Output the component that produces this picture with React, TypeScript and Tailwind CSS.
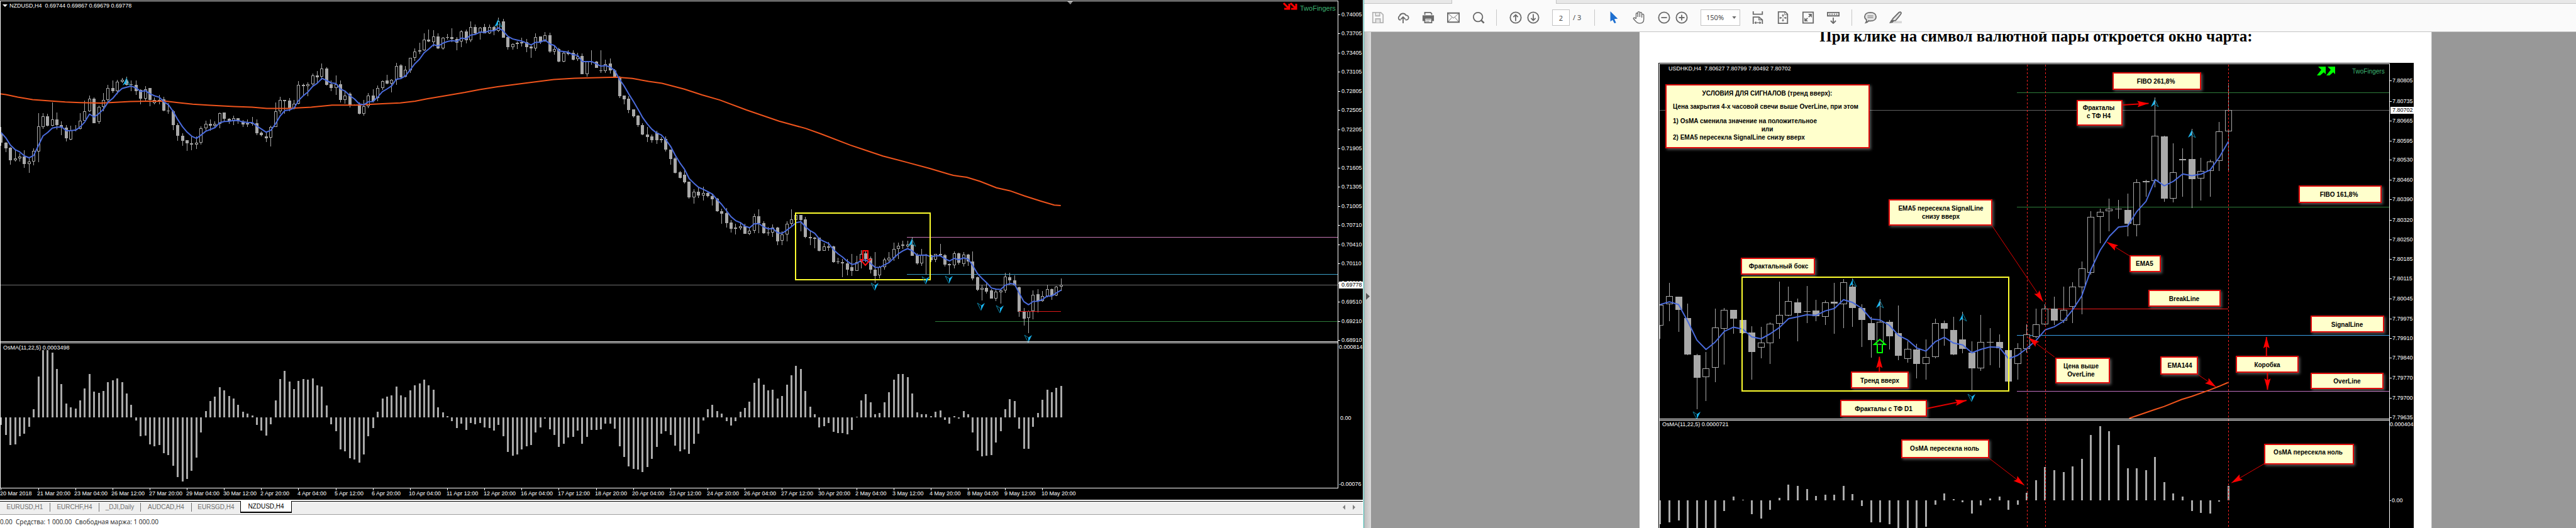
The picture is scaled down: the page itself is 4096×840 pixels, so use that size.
import React from "react";

type Candle = [high: number, top: number, bottom: number, low: number, filled: number];
type Point = [number, number];

const GREY = "#a9a9a9";
const SMALL = "font-['Liberation_Sans',sans-serif] text-[9px]";

/* ---------- NZDUSD data ---------- */

const NZD_MAIN: Candle[] = [
  [572,600,643,655,1],[638,643,668,684,1],[663,664,720,740,1],[676,713,720,728,0],[690,704,714,726,0],
  [677,703,737,754,1],[710,727,739,777,0],[667,678,728,745,0],[510,568,681,731,0],[510,523,571,580,0],
  [513,523,566,568,1],[460,537,566,568,0],[507,536,563,583,1],[546,562,570,608,1],[562,573,622,637,1],
  [565,586,629,631,0],[562,582,583,592,0],[510,542,581,583,0],[452,502,542,544,0],[430,444,502,504,0],
  [439,445,553,554,1],[475,482,550,558,0],[418,450,482,500,0],[382,396,450,462,0],[363,396,409,418,1],
  [358,367,409,425,0],[350,359,367,374,0],[345,361,381,384,1],[363,379,383,409,0],[363,382,410,426,1],
  [402,404,443,469,1],[387,401,443,452,0],[395,397,450,477,1],[439,450,464,470,0],[426,449,450,469,0],
  [435,447,499,501,1],[465,497,501,512,1],[495,500,562,585,1],[555,562,611,634,1],[600,612,634,655,1],
  [630,632,644,678,1],[610,644,650,676,1],[615,641,650,671,0],[568,578,641,651,0],[542,557,578,587,0],
  [538,557,566,587,1],[546,557,566,574,0],[506,508,558,578,0],[505,507,535,546,1],[533,534,545,558,1],
  [520,533,547,564,0],[533,533,545,558,1],[541,545,561,571,1],[538,554,560,570,0],[525,553,556,567,0],
  [538,555,600,609,1],[590,598,608,613,1],[597,614,622,640,1],[567,570,620,658,0],[460,500,570,572,0],
  [436,450,500,512,0],[449,450,455,512,0],[442,453,490,500,1],[450,466,488,491,0],[366,383,466,469,0],
  [375,383,388,431,1],[371,380,388,433,0],[332,338,380,385,0],[321,338,347,371,1],[287,309,346,358,0],
  [303,308,381,384,1],[361,379,396,410,1],[340,380,396,426,0],[362,379,451,462,1],[408,430,451,467,0],
  [417,421,472,483,1],[470,472,474,474,1],[462,473,512,514,1],[450,479,512,520,0],[418,430,479,487,0],
  [403,429,455,462,1],[384,396,440,456,0],[361,364,396,404,0],[337,363,376,378,1],[355,359,376,415,0],
  [282,296,359,381,0],[288,295,347,350,1],[298,315,346,348,0],[259,260,316,328,0],[217,231,260,274,0],
  [191,225,231,244,0],[149,179,226,228,0],[132,178,186,189,1],[136,163,189,209,0],[149,163,219,221,1],
  [167,170,218,224,0],[152,168,171,177,1],[128,168,174,189,1],[166,174,193,227,1],[136,142,186,212,0],
  [132,141,182,195,1],[97,123,182,190,0],[110,123,149,156,1],[121,124,148,178,0],[107,123,149,150,1],
  [110,123,150,152,0],[115,123,140,158,1],[78,97,140,143,0],[86,97,169,171,1],[166,167,211,224,1],
  [195,198,211,224,0],[188,191,198,221,0],[170,190,194,210,1],[175,190,211,236,1],[205,209,219,260,1],
  [149,166,219,228,0],[164,165,190,199,1],[144,158,186,188,0],[146,157,233,237,1],[205,221,232,247,0],
  [214,220,276,280,1],[233,237,276,280,0],[225,236,242,250,1],[225,237,269,271,1],[238,254,267,275,0],
  [240,251,334,335,1],[273,277,334,345,0],[227,277,278,290,0],[273,277,305,306,1],[227,316,321,329,1],
  [269,288,321,328,0],[264,287,318,332,1],[310,316,349,352,1],[343,352,433,442,1],[430,431,448,469,1],
  [433,444,496,509,1],[491,493,522,530,1],[517,520,563,572,1],[553,562,605,608,1],[570,604,616,640,1],
  [606,614,630,642,1],[589,597,631,648,1],[616,625,631,643,0],[614,625,674,682,1],[672,672,716,740,1],
  [706,713,779,781,1],[768,776,801,802,1],[765,787,820,827,1],[817,818,889,894,1],[852,864,889,916,0],
  [844,862,880,892,1],[840,869,880,902,0],[860,868,883,888,1],[870,883,896,924,1],[890,894,950,953,1],
  [938,949,962,1006,1],[936,960,1003,1025,1],[990,1002,1030,1046,1],[1008,1025,1029,1054,1],[997,1018,1026,1034,0],
  [1006,1018,1051,1052,1],[1026,1038,1051,1058,0],[962,972,1038,1048,0],[943,972,1005,1050,1],[995,1004,1050,1051,1],
  [1022,1046,1048,1060,1],[1010,1025,1046,1066,0],[1022,1024,1085,1104,1],[1042,1055,1084,1104,0],[995,1007,1054,1085,0],
  [941,988,1007,1016,0],[964,966,990,992,0],[966,968,990,1040,1],[975,988,1065,1071,1],[1040,1065,1073,1104,1],
  [1065,1069,1074,1118,1],[1069,1070,1128,1130,1],[1095,1108,1128,1129,0],[1088,1109,1113,1128,1],[1105,1110,1178,1182,1],
  [1160,1177,1180,1188,1],[1165,1180,1186,1247,1],[1165,1184,1214,1239,1],[1143,1203,1218,1241,1],[1152,1178,1218,1220,0],
  [1125,1142,1180,1208,0],[1128,1141,1166,1180,1],[1155,1162,1214,1231,1],[1133,1213,1241,1273,1],[1195,1202,1240,1253,0],
  [1160,1169,1202,1214,0],[1134,1160,1170,1180,0],[1091,1119,1160,1174,0],[1091,1105,1120,1166,0],[1082,1100,1106,1120,0],
  [1084,1100,1110,1113,0],[1067,1100,1150,1152,1],[1140,1149,1186,1190,1],[1120,1148,1186,1196,0],[1142,1147,1148,1236,0],
];

const NZD_RECENT: Candle[] = [
  [355,360,382,390,1],[352,353,378,390,0],[308,352,360,365,1],[354,359,402,410,1],[396,398,403,443,1],
  [342,350,403,418,0],[349,350,391,402,1],[346,355,398,410,0],[353,355,388,406,1],[341,387,461,471,1],
  [453,457,512,517,1],[489,505,511,560,0],[485,505,520,530,1],[508,515,550,552,1],[510,520,550,563,0],
  [506,514,522,573,0],[437,453,514,527,0],[436,457,470,489,1],[447,470,493,495,1],[499,500,609,632,1],
  [594,609,639,671,1],[604,606,638,705,0],[515,534,606,643,0],[510,533,562,612,1],[518,540,562,566,0],
  [491,508,540,545,0],[507,508,540,558,1],[495,498,536,541,0],[462,489,498,519,0],
];

const NZD_OSMA = [
  516,567,621,617,576,560,525,435,267,128,128,144,228,306,405,426,432,390,327,252,345,351,342,294,285,276,294,354,
  411,492,576,570,615,627,621,663,672,726,786,807,795,753,684,555,444,393,369,321,336,366,381,411,447,459,468,516,
  546,570,513,390,279,237,291,330,288,279,282,276,312,318,414,513,549,642,651,687,693,711,669,573,531,447,378,369,
  363,318,363,372,339,312,303,282,312,333,426,450,471,495,531,510,543,507,513,507,528,531,546,516,576,654,675,669,
  642,627,621,555,528,483,540,567,630,612,582,
].map((v) => 477 - v);

const NZD_OSMA_LATE = [
  549,516,582,549,513,513,510,480,480,504,597,651,699,714,717,729,702,660,600,531,519,537,594,621,612,636,582,531,
  462,405,381,414,429,468,489,465,417,399,366,270,246,279,306,303,351,336,279,228,180,198,312,393,432,498,492,477,
  522,528,528,534,513,444,360,327,369,432,423,369,318,252,222,222,240,324,420,432,432,441,417,412,459,479,440,452,
  416,431,524,619,649,646,641,578,519,405,354,363,504,610,610,495,423,357,303,318,293,285,
].map((v) => 447 - v);

const NZD_EMA144: Point[] = [
  [0,422],[20,426],[60,437],[110,448],[160,453],[220,459],[270,462],[340,464],[400,460],[440,457],[500,455],[560,455],
  [600,462],[650,469],[710,474],[790,479],[850,482],[900,488],[970,488],[1050,482],[1120,473],[1200,473],[1290,467],
  [1350,463],[1400,455],[1440,445],[1500,431],[1568,416],[1618,403],[1678,390],[1768,375],[1868,358],[1938,352],
  [2018,349],[2078,347],[2133,353],[2188,366],[2233,375],[2308,401],[2368,427],[2428,450],[2518,495],[2628,545],
  [2718,578],[2768,602],[2868,653],[2918,675],[2978,702],[3058,730],[3136,758],[3202,784],[3216,789],[3261,798],
  [3306,816],[3361,845],[3406,858],[3456,882],[3511,905],[3556,923],[3578,925],
];

const NZD_PRICES = [
  "0.74005","0.73705","0.73405","0.73105","0.72805","0.72505","0.72205","0.71905","0.71605","0.71305","0.71005",
  "0.70710","0.70410","0.70110","0.69810","0.69510","0.69210","0.68910",
];

const NZD_DATES = [
  "20 Mar 2018","21 Mar 20:00","23 Mar 04:00","26 Mar 12:00","27 Mar 20:00","29 Mar 04:00","30 Mar 12:00","2 Apr 20:00",
  "4 Apr 04:00","5 Apr 12:00","6 Apr 20:00","10 Apr 04:00","11 Apr 12:00","12 Apr 20:00","16 Apr 04:00","17 Apr 12:00",
  "18 Apr 20:00","20 Apr 04:00","23 Apr 12:00","24 Apr 20:00","26 Apr 04:00","27 Apr 12:00","30 Apr 20:00","2 May 04:00",
  "3 May 12:00","4 May 20:00","8 May 04:00","9 May 12:00","10 May 20:00",
];

/* ---------- USDHKD data ---------- */

const HKD: Candle[] = [
  [831,832,901,944,0],[760,804,830,885,0],[806,806,849,922,1],[827,875,996,997,1],[994,997,1073,1177,1],
  [988,1041,1071,1149,0],[844,906,1039,1087,0],[842,849,910,1028,0],[848,849,877,928,1],[881,881,926,927,1],
  [902,923,988,1078,1],[904,957,973,1009,0],[890,894,958,1026,0],[756,866,895,944,0],[773,819,868,869,0],
  [811,823,859,952,1],[770,852,854,893,0],[816,851,870,885,1],[818,823,872,898,0],[760,822,828,927,1],
  [747,757,830,908,0],[745,771,843,904,1],[831,842,882,970,1],[871,892,949,1006,1],[813,888,963,965,0],
  [882,888,935,979,1],[835,925,1000,1015,1],[952,978,1010,1022,0],[960,980,1027,1075,1],[946,1005,1027,1078,0],
  [877,892,1004,1008,0],[883,893,910,967,1],[871,915,996,997,1],[854,946,977,992,1],[953,990,1042,1115,1],
  [865,955,1042,1049,0],[909,955,957,1032,0],[929,955,975,1040,1],[981,982,1085,1086,1],[959,976,1027,1078,0],
  [896,930,977,990,0],[844,897,938,941,0],[831,845,897,899,0],[806,844,884,898,1],[771,849,884,892,0],
  [758,773,838,892,0],[689,711,774,863,0],[523,541,727,732,0],[516,525,543,629,0],[481,515,524,590,0],
  [486,515,517,548,0],[465,519,565,606,1],[417,429,568,606,0],[420,424,429,475,0],[149,275,424,444,0],
  [275,276,481,493,1],[299,395,481,495,0],[316,352,356,475,0],[251,352,418,513,1],[348,391,416,489,0],
  [353,359,391,476,0],[229,261,357,391,0],[100,190,261,391,0],
];

const HKD_OSMA = [
  1556,1549,1543,1590,1600,1600,1580,1511,1465,1474,1522,1536,1507,1468,1424,1428,1440,1461,1457,1457,1428,1455,1496,
  1550,1550,1556,1580,1585,1580,1563,1491,1453,1472,1482,1519,1494,1470,1465,1508,1490,1451,1411,1367,1378,1384,1365,
  1340,1260,1233,1248,1294,1371,1371,1378,1333,1417,1453,1465,1511,1518,1520,1481,1428,
];

const HKD_PRICES: [string, number][] = [
  ["7.80805",93],["7.80735",160],["7.80665",225],["7.80595",291],["7.80530",353],["7.80460",420],["7.80390",485],
  ["7.80320",552],["7.80250",617],["7.80185",681],["7.80115",746],["7.80045",812],["7.79975",878],["7.79910",941],
  ["7.79840",1006],["7.79770",1073],["7.79700",1138],["7.79635",1202],
];

interface Note {
  box: [number, number, number, number];
  lines: { text: string; y: number; x?: number; start?: boolean }[];
}

const NOTES: Note[] = [
  { box: [59,105,847,316], lines: [
    { text: "УСЛОВИЯ ДЛЯ СИГНАЛОВ (тренд вверх):", y: 134, x: 450 },
    { text: "Цена закрытия 4-х часовой свечи выше OverLine, при этом", y: 178, x: 86, start: true },
    { text: "1) OsMA сменила значение на положительное", y: 224, x: 86, start: true },
    { text: "или", y: 251, x: 450 },
    { text: "2) EMA5 пересекла SignalLine снизу вверх", y: 278, x: 86, start: true },
  ] },
  { box: [919,485,1319,573], lines: [{ text: "EMA5 пересекла SignalLine", y: 513 }, { text: "снизу вверх", y: 540 }] },
  { box: [350,677,637,732], lines: [{ text: "Фрактальный бокс", y: 703 }] },
  { box: [774,1052,996,1108], lines: [{ text: "Тренд вверх", y: 1080 }] },
  { box: [731,1146,1065,1201], lines: [{ text: "Фракталы с ТФ D1", y: 1173 }] },
  { box: [966,1275,1305,1337], lines: [{ text: "OsMA пересекла ноль", y: 1304 }] },
  { box: [1781,66,2122,123], lines: [{ text: "FIBO 261,8%", y: 94, x: 1948 }] },
  { box: [1643,156,1821,240], lines: [{ text: "Фракталы", y: 182, x: 1728 }, { text: "с ТФ H4", y: 209, x: 1728 }] },
  { box: [1846,669,1968,725], lines: [{ text: "EMA5", y: 696, x: 1904 }] },
  { box: [1920,783,2198,838], lines: [{ text: "BreakLine", y: 812 }] },
  { box: [2498,438,2817,496], lines: [{ text: "FIBO 161,8%", y: 467, x: 2655 }] },
  { box: [2545,868,2828,924], lines: [{ text: "SignalLine", y: 896 }] },
  { box: [2545,1055,2826,1109], lines: [{ text: "OverLine", y: 1083 }] },
  { box: [2256,1000,2499,1056], lines: [{ text: "Коробка", y: 1028 }] },
  { box: [1967,1002,2113,1063], lines: [{ text: "EMA144", y: 1030 }] },
  { box: [1560,1006,1770,1090], lines: [{ text: "Цена выше", y: 1034, x: 1661 }, { text: "OverLine", y: 1061, x: 1661 }] },
  { box: [2366,1289,2713,1357], lines: [{ text: "OsMA пересекла ноль", y: 1317, x: 2536 }] },
];

const POINTERS: [number, number, number, number, number][] = [
  [1318,572,1514,821,1],[883,1052,883,1003,2],[1065,1174,1219,1147,2],[1305,1337,1442,1427,1],[1558,1004,1457,940,1],
  [1821,173,1921,168,2],[1846,670,1760,625,1],[2113,1063,2181,1103,1],[2375,1000,2375,938,2],[2379,1056,2379,1112,2],
  [2366,1356,2240,1419,1],
];

/* ---------- chart parts ---------- */

const px = Math.round;
const crisp = "crispEdges" as const;

function ema(values: number[], start: number): number[] {
  let last = start;
  return values.map((v, i) => (i === 0 ? last : (last += (v - last) / 3)));
}

function path(points: Point[]): string {
  return points.map(([x, y], i) => `${i ? "L" : "M"}${x.toFixed(1)} ${y.toFixed(1)}`).join("");
}

function Candles({ data, x, half }: { data: Candle[]; x: (i: number) => number; half: number }) {
  return (
    <g shapeRendering={crisp}>
      {data.map(([h, t, b, l, filled], i) => {
        const cx = px(x(i));
        const [hi, top, bot, lo] = [px(h), px(t), px(b), px(l)];
        const size = Math.max(bot - top, 1);
        return (
          <g key={i} fill={GREY}>
            <rect x={cx} y={hi} width={1} height={Math.max(top - hi, 0)} />
            <rect x={cx} y={bot} width={1} height={Math.max(lo - bot, 0)} />
            {filled || size < 3 ? (
              <rect x={cx - half} y={top} width={half * 2 + 1} height={size} />
            ) : (
              <rect x={cx - half + 0.5} y={top + 0.5} width={half * 2} height={size - 1} fill="#000" stroke={GREY} />
            )}
          </g>
        );
      })}
    </g>
  );
}

function Fractal({ x, y, down = false }: { x: number; y: number; down?: boolean }) {
  return (
    <g transform={`translate(${px(x)} ${px(y)}) scale(${down ? "-1 -1" : "1 1"})`}>
      <path d="M0 -6L-6 6L0 2Z" fill="#19b5f0" />
      <path d="M0 -6L6 6L0 2" fill="none" stroke="#0e86a8" />
    </g>
  );
}

function Pointer({ x1, y1, x2, y2, w }: { x1: number; y1: number; x2: number; y2: number; w: number }) {
  const angle = (Math.atan2(y2 - y1, x2 - x1) * 180) / Math.PI;
  return (
    <g>
      <line x1={x1} y1={y1} x2={x2} y2={y2} stroke="#e00000" strokeWidth={w} />
      <path d="M0 0L-18 -5L-15 0L-18 5Z" fill="#ff0000" transform={`translate(${x2} ${y2}) rotate(${angle})`} />
    </g>
  );
}

function Label({ x, y, fill = "#fff", children }: { x: number; y: number; fill?: string; children: string }) {
  return (
    <text x={px(x)} y={px(y) + 3} fill={fill} className={SMALL}>
      {children}
    </text>
  );
}

function NzdChart() {
  const K = 0.924;
  const x = (i: number) => (1.5 + 8 * i) * K;
  const candles: Candle[] = [
    ...NZD_MAIN.map(([h, t, b, l, f]) => [h * 0.35357, t * 0.35357, b * 0.35357, l * 0.35357, f] as Candle),
    ...NZD_RECENT.map((c) => [...c.slice(0, 4).map((v) => 277.2 + v * 0.35887), c[4]] as Candle),
  ];
  const fast = ema(candles.map((c) => (c[4] ? c[2] : c[1])), 211);
  const osma = [...NZD_OSMA, ...NZD_OSMA_LATE];
  return (
    <svg viewBox="0 0 2167 795" className="block w-full bg-black" role="img" aria-label="NZDUSD,H4">
      <g shapeRendering={crisp}>
        <rect x={0} y={453} width={2127} height={1} fill="#707070" />
        <rect x={1442} y={377} width={685} height={1} fill="#c878b4" />
        <rect x={1442} y={436} width={685} height={1} fill="#3aa0c8" />
        <rect x={1487} y={511} width={640} height={1} fill="#2e7d3a" />
      </g>
      <Candles data={candles} x={x} half={2} />
      <rect x={1620} y={495} width={67} height={1} fill="#e01818" />
      <path d={path(NZD_EMA144.map(([a, b]) => [a * 0.4714, b * 0.35357]))} fill="none" stroke="#f0541c" strokeWidth={2} />
      <path d={path(fast.map((v, i) => [x(i) + 0.5, v]))} fill="none" stroke="#4a6bdc" strokeWidth={2} strokeLinejoin="round" />
      <rect x={1265} y={339} width={214} height={106} fill="none" stroke="#ffff2e" strokeWidth={2} shapeRendering={crisp} />
      <path d="M1372 399h8v14h4l-8 9l-8 -9h4z" fill="none" stroke="#ff1010" strokeWidth={2} />
      <Fractal x={201} y={130} />
      <Fractal x={792} y={37} />
      <Fractal x={1450} y={386} />
      <Fractal x={1391} y={456} down />
      <Fractal x={1472} y={446} down />
      <Fractal x={1509} y={445} down />
      <Fractal x={1560} y={488} down />
      <Fractal x={1590} y={492} down />
      <Fractal x={1635} y={539} down />
      <g shapeRendering={crisp} fill={GREY}>
        {osma.map((v, i) => {
          const end = px(664 - v * 0.308);
          return <rect key={i} x={px(x(i)) - 1} y={Math.min(end, 664)} width={3} height={Math.max(Math.abs(end - 664), 1)} />;
        })}
      </g>
      <g shapeRendering={crisp} fill="#fff">
        <rect x={0} y={1} width={2128} height={1} />
        <rect x={0} y={543} width={2128} height={1} />
        <rect x={0} y={545} width={2128} height={1} />
        <rect x={0} y={776} width={2128} height={1} />
        <rect x={0} y={1} width={1} height={776} />
        <rect x={2127} y={1} width={1} height={776} />
        {NZD_PRICES.map((p, i) => <rect key={p} x={2128} y={px(22.5 + 30.5 * i)} width={3} height={1} />)}
        {NZD_DATES.map((d, i) => <rect key={d} x={px(x(8 * i))} y={777} width={1} height={3} />)}
      </g>
      <path d="M1697 2h9l-4 5z" fill="#909090" />
      <path d="M4 7h8l-4 4z" fill="#fff" />
      <Label x={15} y={9}>{"NZDUSD,H4\u00a0 0.69744 0.69867 0.69679 0.69778"}</Label>
      <Label x={5} y={553}>OsMA(11,22,5) 0.0003498</Label>
      {NZD_PRICES.map((p, i) => <Label key={p} x={2133} y={22.5 + 30.5 * i}>{p}</Label>)}
      <rect x={2129} y={448} width={38} height={11} fill="#fff" />
      <Label x={2133} y={453} fill="#000">0.69778</Label>
      <Label x={2129} y={552}>0.000814</Label>
      <Label x={2131} y={665}>0.00</Label>
      <Label x={2129} y={770}>-0.00076</Label>
      {NZD_DATES.map((d, i) => <Label key={d} x={59.136 * i} y={785}>{d}</Label>)}
      <g stroke="#ff0000" strokeWidth={3} fill="none">
        <path d="M2041 5l8 8M2050 6v8h-8M2052 5l8 8M2061 6v8h-8" />
      </g>
      <text x={2067} y={17} fill="#3cb371" className="font-['Liberation_Sans',sans-serif] text-[11px]">TwoFingers</text>
    </svg>
  );
}

function HkdChart() {
  const X = (u: number) => 0.4125 * u - 12.9;
  const Y = (v: number) => 0.48263 * v - 16.6;
  const x = (i: number) => X(37 + 35.33 * i);
  const candles = HKD.map(([h, t, b, l, f]) => [Y(h), Y(t), Y(b), Y(l), f] as Candle);
  const fast = ema(candles.map((c) => (c[4] ? c[2] : c[1])), Y(831));
  const zero = px(Y(1476));
  const slow: Point[] = [[1846,1206],[1908,1188],[1945,1177],[1981,1167],[2048,1144],[2086,1134],[2158,1112],[2191,1101],[2227,1088]];
  const right = px(X(2848));
  const level = (from: number, y: number, fill: string, to = right) => (
    <rect x={px(X(from))} y={px(Y(y))} width={to - px(X(from))} height={1} fill={fill} />
  );
  return (
    <svg viewBox="0 0 1201 760" className="block w-full bg-black" role="img" aria-label="USDHKD,H4">
      <g shapeRendering={crisp}>
        {level(36, 190, "#606060")}
        {level(1413, 132, "#2e7d3a")}
        {level(1413, 508, "#2e7d3a")}
        {level(1413, 931, "#3aa0e8")}
        {level(1413, 1117, "#c070c0")}
        {level(1522, 845, "#f01818", px(X(2227)))}
      </g>
      <svg x={2} y={0} width={1199} height={760} viewBox="2 0 1199 760">
        <Candles data={candles} x={x} half={5} />
      </svg>
      <path d={path(slow.map(([a, b]) => [X(a), Y(b)]))} fill="none" stroke="#f0541c" strokeWidth={2} />
      <path d={path(fast.map((v, i) => [x(i) + 0.5, v]))} fill="none" stroke="#4a6bdc" strokeWidth={2} strokeLinejoin="round" />
      <rect x={px(X(354))} y={px(Y(741))} width={424} height={181} fill="none" stroke="#ffff2e" strokeWidth={2} shapeRendering={crisp} />
      <g shapeRendering={crisp} fill={GREY}>
        {HKD_OSMA.map((v, i) => {
          const end = px(Y(v));
          return <rect key={i} x={px(x(i)) - 1} y={Math.min(end, zero)} width={3} height={Math.max(Math.abs(end - zero), 1)} />;
        })}
      </g>
      <g stroke="#ff2020" strokeDasharray="3 3" shapeRendering={crisp}>
        {[1451, 1522, 2227].map((u) => <line key={u} x1={px(X(u)) + 0.5} x2={px(X(u)) + 0.5} y1={3} y2={760} />)}
      </g>
      <g transform={`translate(${px(X(885))} ${px(Y(945))})`}>
        <path d="M0 1L9 9H4V22H-4V9H-9Z" fill="none" stroke="#00ff00" strokeWidth={2} />
      </g>
      {[[781,760],[885,831],[1204,873],[1945,166],[2086,269]].map(([a, b]) => <Fractal key={a} x={X(a)} y={Y(b)} />)}
      {[[179,1196],[1239,1138]].map(([a, b]) => <Fractal key={a} x={X(a)} y={Y(b)} down />)}
      <g shapeRendering={crisp} fill="#fff">
        <rect x={1} y={1} width={right} height={1} />
        <rect x={1} y={px(Y(1207))} width={right} height={1} />
        <rect x={1} y={px(Y(1207)) + 2} width={right} height={1} />
        <rect x={1} y={1} width={1} height={759} />
        <rect x={right} y={1} width={1} height={759} />
        {HKD_PRICES.map(([p, y]) => <rect key={p} x={right} y={px(Y(y))} width={4} height={1} />)}
        <rect x={right} y={zero} width={3} height={1} />
      </g>
      {NOTES.map(({ box: [x1, y1, x2, y2], lines }) => (
        <g key={`${x1}-${y1}`}>
          <rect
            x={px(X(x1)) + 1} y={px(Y(y1)) + 1} width={px(X(x2) - X(x1)) - 2} height={px(Y(y2) - Y(y1)) - 2}
            fill="#ffffcc" stroke="#e00a0a" strokeWidth={2}
            className="drop-shadow-[2px_2px_2px_rgba(255,255,255,0.35)]"
          />
          {lines.map((l) => (
            <text
              key={l.y} x={px(X(l.x ?? (x1 + x2) / 2))} y={px(Y(l.y)) + 4} textAnchor={l.start ? "start" : "middle"}
              className="font-['Liberation_Sans',sans-serif] text-[10px] font-bold" fill="#000"
            >
              {l.text}
            </text>
          ))}
        </g>
      ))}
      {POINTERS.map(([a, b, c, d, w]) => <Pointer key={`${a}-${b}`} x1={X(a)} y1={Y(b)} x2={X(c)} y2={Y(d)} w={w} />)}
      <Label x={16} y={9}>{"USDHKD,H4\u00a0 7.80627 7.80799 7.80492 7.80702"}</Label>
      <Label x={6} y={Y(1226)}>OsMA(11,22,5) 0.0000721</Label>
      {HKD_PRICES.map(([p, y]) => <Label key={p} x={1167} y={Y(y)}>{p}</Label>)}
      <rect x={1164} y={px(Y(190)) - 5} width={37} height={11} fill="#fff" />
      <Label x={1167} y={Y(190)} fill="#000">7.80702</Label>
      <Label x={1163} y={Y(1223) + 1}>0.000404</Label>
      <Label x={1166} y={Y(1477)}>0.00</Label>
      <g fill="#00ff00">
        <path d="M1049 6H1061V18L1058 15L1052 20H1047L1054 11Z" />
        <path d="M1064 6H1076V18L1073 15L1067 20H1062L1069 11Z" />
      </g>
      <text x={1103} y={17} fill="#3cb371" className="font-['Liberation_Sans',sans-serif] text-[10px]">TwoFingers</text>
    </svg>
  );
}

/* ---------- toolbar ---------- */

function Tool({ label, gap, children }: { label: string; gap?: string; children: React.ReactNode }) {
  return (
    <button type="button" aria-label={label} className={`h-5 w-5 shrink-0 ${gap ?? ""}`}>
      <svg viewBox="0 0 22 22" className="h-5 w-5" fill="none" stroke="#6a6a6a" strokeWidth={2}>
        {children}
      </svg>
    </button>
  );
}

const Rule = ({ gap }: { gap: string }) => <span className={`h-[26px] w-px shrink-0 bg-[#c8c8c8] ${gap}`} />;

function Toolbar() {
  return (
    <div className="flex h-[45px] shrink-0 items-center border-b border-[#c4c4c4] bg-[#fafafa] pl-3 font-['Noto_Sans',sans-serif] text-[11px] text-[#4a4a4a]">
      <Tool label="Сохранить">
        <g stroke="#b4b4b4"><path d="M2 2H16L20 6V20H2Z" /><path d="M7 2V8H14V2" /><path d="M7 20V13H15V20" fill="#e4e4e4" /><path d="M11 4V6" strokeWidth={1} /></g>
      </Tool>
      <Tool label="Загрузить" gap="ml-5">
        <path d="M7 15H5A4 4 0 0 1 5 8A6 6 0 0 1 16 7A4 4 0 0 1 17 15H15" /><path d="M11 21V10M7 14L11 10L15 14" />
      </Tool>
      <Tool label="Печать" gap="ml-5">
        <path d="M5 6V2H15L17 4V6" /><path d="M1 7H21V17H1Z" fill="#6a6a6a" stroke="none" /><path d="M5 12H17V20H5Z" fill="#fafafa" /><path d="M7 14.500H15M7 17.500H13" strokeWidth={1} />
      </Tool>
      <Tool label="Письмо" gap="ml-5">
        <path d="M1 3H21V19H1Z" /><path d="M2 4L11 12L20 4M2 18L8.500 10.500M20 18L13.500 10.500" strokeWidth={1} />
      </Tool>
      <Tool label="Поиск" gap="ml-5">
        <circle cx={10} cy={10} r={8} /><path d="M15.500 15.500L20.500 20.500" strokeWidth={3} />
      </Tool>
      <Rule gap="ml-[18px]" />
      <Tool label="Предыдущая страница" gap="ml-5"><circle cx={11} cy={11} r={9.500} /><path d="M11 17V6M7 10L11 6L15 10" /></Tool>
      <Tool label="Следующая страница" gap="ml-2"><circle cx={11} cy={11} r={9.500} /><path d="M11 5V16M7 12L11 16L15 12" /></Tool>
      <input aria-label="Страница" defaultValue="2" className="ml-5 h-[26px] w-7 shrink-0 border border-[#c4c4c4] bg-white text-center" />
      <span className="ml-[5px] w-4 shrink-0 whitespace-nowrap">/ 3</span>
      <Rule gap="ml-[18px]" />
      <Tool label="Выделение" gap="ml-5"><path d="M5 0L18 13L12 13.500L15 20L12 21L9 15L5 18Z" fill="#1e6fd0" stroke="none" /></Tool>
      <Tool label="Рука" gap="ml-5">
        <path d="M6 13V4.500A1.500 1.500 0 0 1 9 4.500V10V2.500A1.500 1.500 0 0 1 12.500 2.500V10V3.500A1.500 1.500 0 0 1 16 3.500V11V6.500A1.500 1.500 0 0 1 19.500 6.500V14Q19.500 21 12.500 21Q8 21 5 17L1.500 13Q1 10.500 4 11.500L6 13" strokeWidth={1.500} />
      </Tool>
      <Tool label="Уменьшить" gap="ml-5"><circle cx={11} cy={11} r={9.500} /><path d="M6 11H16" /></Tool>
      <Tool label="Увеличить" gap="ml-2"><circle cx={11} cy={11} r={9.500} /><path d="M6 11H16M11 6V16" /></Tool>
      <span className="relative ml-5 shrink-0">
        <select aria-label="Масштаб" defaultValue="150%" className="block h-[26px] w-[63px] appearance-none border border-[#c4c4c4] bg-white pl-2">
          <option>150%</option>
        </select>
        <svg viewBox="0 0 8 5" className="pointer-events-none absolute right-[6px] top-[11px] h-[4px] w-[7px]" fill="#6a6a6a"><path d="M0 0H8L4 5Z" /></svg>
      </span>
      <Tool label="По ширине" gap="ml-[18px]">
        <path d="M3 -1V5H19V-1" /><path d="M3 24V10H13L19 15V24" /><path d="M13 10V15H19" strokeWidth={1.500} /><path d="M6 20H16M8 18L6 20L8 22M14 18L16 20L14 22" strokeWidth={1.500} />
      </Tool>
      <Tool label="Страница целиком" gap="ml-5">
        <path d="M3 1H15L19 5V21H3Z" /><path d="M14 1V6H19" strokeWidth={1} /><path d="M11 6V10M11 13V17M5.500 11.500H9.500M12.500 11.500H16.500M9.500 7.500L11 6L12.500 7.500M9.500 15.500L11 17L12.500 15.500M7 10L5.500 11.500L7 13M15 10L16.500 11.500L15 13" strokeWidth={1.300} />
      </Tool>
      <Tool label="Полный экран" gap="ml-5">
        <path d="M2 1.500H20V20.500H2Z" /><path d="M11 4.500H17.500V11ZM4.500 11V17.500H11Z" fill="#6a6a6a" stroke="none" /><path d="M12 10L15 7M7 15L10 12" />
      </Tool>
      <Tool label="Прокрутка" gap="ml-5">
        <path d="M1 2H21V8H1Z" /><path d="M4 5H18" strokeDasharray="2 2" /><path d="M11 11V21M6.500 16.500L11 21L15.500 16.500" />
      </Tool>
      <Rule gap="ml-[19px]" />
      <Tool label="Заметка" gap="ml-[19px]">
        <path d="M11 2C17 2 21 5 21 9.500C21 14 17 17 11 17Q9 17 8 16.500Q6 19.500 3 20Q5 17 4 14.500Q1 12.500 1 9.500C1 5 5 2 11 2Z" fill="#e4e4e4" /><path d="M6 8H16M6 11H16" strokeWidth={1.300} />
      </Tool>
      <Tool label="Маркер" gap="ml-5">
        <path d="M6 21H22V17H10Z" fill="#d8d8d8" stroke="none" /><path d="M6 13L17 2Q20 0 21 3Q21 5 11 16L6 17Z" fill="#e4e4e4" /><path d="M4 14L8 18L6 20L0 21Z" fill="#6a6a6a" stroke="none" />
      </Tool>
    </div>
  );
}

/* ---------- windows ---------- */

const TABS: [string, string][] = [
  ["EURUSD,H1", "w-[80px]"], ["EURCHF,H4", "w-[78px]"], ["_DJI,Daily", "w-[66px]"], ["AUDCAD,H4", "w-[81px]"], ["EURSGD,H4", "w-[77px]"],
];

function Terminal() {
  return (
    <section className="flex min-h-0 min-w-0 flex-col border-r border-[#35b0a8] bg-white pr-px font-['Liberation_Sans',sans-serif]">
      <NzdChart />
      <div className="mt-[2px] flex h-[19px] shrink-0 border-t border-black bg-[#efefef] text-[10px] leading-[16px] text-[#707070]">
        {TABS.map(([name, width], i) => (
          <button
            key={name} type="button"
            className={`h-[14px] shrink-0 self-center border-[#707070] leading-[14px] ${i < TABS.length - 1 ? "border-r" : ""} ${width}`}
          >
            {name}
          </button>
        ))}
        <button type="button" className="-mt-px w-[82px] shrink-0 border-x border-b-2 border-black bg-white leading-[16px] text-black">
          NZDUSD,H4
        </button>
        <div className="ml-auto mr-3 flex items-center gap-3">
          <button type="button" aria-label="Назад" className="h-2 w-1"><svg viewBox="0 0 4 8" className="h-2 w-1" fill="#808080"><path d="M4 0V8L0 4Z" /></svg></button>
          <button type="button" aria-label="Вперёд" className="h-2 w-1"><svg viewBox="0 0 4 8" className="h-2 w-1" fill="#808080"><path d="M0 0V8L4 4Z" /></svg></button>
        </div>
      </div>
      <div className="h-[3px] shrink-0 border-b border-[#a0a0a0] bg-[#efefef]" />
      <footer className="flex-1 overflow-hidden whitespace-pre font-['Open_Sans',sans-serif] text-[10px] leading-[22px] text-[#1a1a1a]">
        {"0.00  Средства: 1 000.00  Свободная маржа: 1 000.00"}
      </footer>
    </section>
  );
}

function Reader() {
  return (
    <section className="flex min-h-0 min-w-0 flex-col">
      <div className="flex h-[6px] shrink-0">
        <span className="w-[140px] border-b border-r border-[#c4c4c4] bg-[#e8e8e8]" />
        <span className="w-[165px] bg-[#fafafa]" />
        <span className="flex-1 border-b border-l border-[#c4c4c4] bg-[#e8e8e8]" />
      </div>
      <Toolbar />
      <div className="flex min-h-0 flex-1">
        <div className="flex w-[11px] shrink-0 items-center justify-center bg-linear-to-r from-[#bdbdbd] to-[#dcdcdc] pt-[52px]">
          <svg viewBox="0 0 6 11" className="h-[11px] w-[6px]" fill="#555"><path d="M0 0L6 5.500L0 11Z" /></svg>
        </div>
        <div className="grid min-h-0 flex-1 grid-cols-[427fr_1260fr_229fr] bg-[#989898]">
          <article className="col-start-2 min-h-0 overflow-hidden border-r border-[#b8b8b8] bg-white pl-[30px] pr-7">
            <h1 className="-mt-[8px] mb-[27px] whitespace-nowrap text-center font-['Liberation_Serif',serif] text-[25px] font-bold leading-[30px] text-black">
              При клике на символ валютной пары откроется окно чарта:
            </h1>
            <HkdChart />
          </article>
        </div>
      </div>
    </section>
  );
}

export default function App() {
  return (
    <main className="grid h-screen grid-cols-[2169fr_1927fr] grid-rows-[minmax(0,1fr)] overflow-hidden bg-white">
      <Terminal />
      <Reader />
    </main>
  );
}
